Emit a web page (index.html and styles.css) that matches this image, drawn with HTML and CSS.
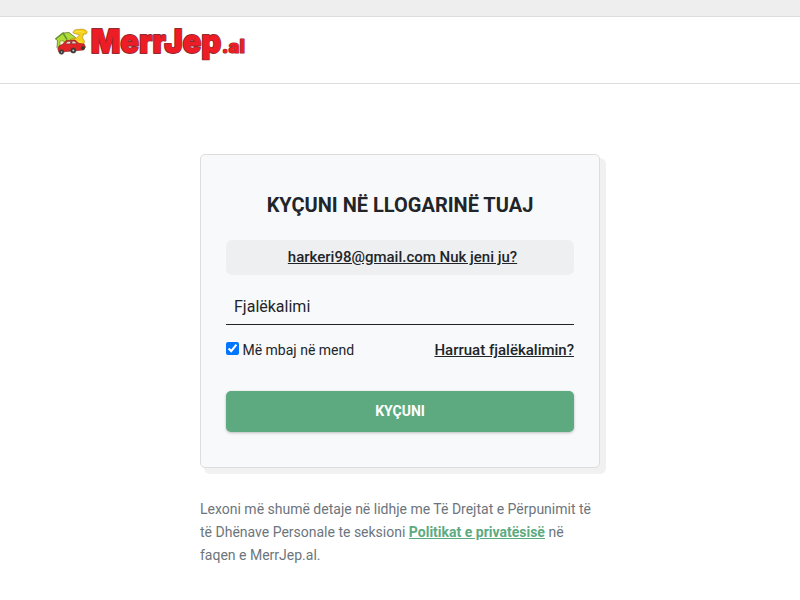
FILE: index.html
```html
<!DOCTYPE html>
<html lang="sq">
<head>
<meta charset="utf-8">
<title>MerrJep.al</title>
<link rel="stylesheet" href="styles.css">
</head>
<body>
<div class="topbar"></div>
<header class="header">
  <svg class="logo" width="192" height="36" viewBox="54 26 192 36" role="img" aria-label="MerrJep.al">
    <g stroke="#454819" stroke-width=".6" stroke-linejoin="round">
      <path d="M55.500 39L63 33l6-.5 6.500 5-2 3 .5 7-14 3-3-3 .5-7z" fill="#b0dc38"/>
      <path d="M55.500 39L63 33l4 6.500" fill="none" stroke="#64932c" stroke-width="1.500"/>
      <path d="M60 41h4v5h-4z" fill="#fffbd0" stroke="#64812c"/>
      <path d="M73 33c0-3 3-4 6-3.500 3-1 7 0 8 2 .5 2-1 3-3.500 2.500l-1 4 2 3-1 5-12-3-1-4 6-1 3-3z" fill="#f6d018" stroke="#a98b20"/>
      <path d="M74 32.500c3-1.500 7-1 10 0M71 41l11 1" fill="none" stroke="#fff169"/>
      <path d="M59 46l4-2 3-3.500 9-.5 4 3.500 5 .5 1.500 3-2 3-17 1.500-7.500 1-1-3z" fill="#e32228" stroke="#7d171b"/>
      <path d="M65.500 44l2-2.500 3-.2v2.500zm6.500-2.800l2.500 0 2.500 2.400-5 .2z" fill="#dedfd5" stroke="#762222" stroke-width=".5"/>
      <circle cx="61.500" cy="52" r="2.300" fill="#34363d"/><circle cx="61.500" cy="52" r=".8" fill="#c9cbd0" stroke="none"/>
      <circle cx="73.300" cy="50.500" r="2.600" fill="#34363d"/><circle cx="73.300" cy="50.500" r="1" fill="#c9cbd0" stroke="none"/>
      <circle cx="83" cy="48" r="1.700" fill="#34363d"/>
    </g>
    <text class="word" x="90.800" y="53.300" textLength="130.500" lengthAdjust="spacingAndGlyphs">MerrJep</text>
    <text class="word suffix" x="221.800" y="53.300" textLength="23" lengthAdjust="spacingAndGlyphs">.al</text>
  </svg>
</header>
<main class="content">
  <form class="card">
    <h1>KYÇUNI NË LLOGARINË TUAJ</h1>
    <div class="account"><a href="#">harkeri98@gmail.com Nuk jeni ju?</a></div>
    <input class="password" type="password" placeholder="Fjalëkalimi">
    <div class="options">
      <label><input type="checkbox" checked> Më mbaj në mend</label>
      <a href="#">Harruat fjalëkalimin?</a>
    </div>
    <button type="button">KYÇUNI</button>
  </form>
  <p class="privacy">Lexoni më shumë detaje në lidhje me Të Drejtat e Përpunimit të të Dhënave Personale te seksioni <a href="#">Politikat e privatësisë</a> në faqen e MerrJep.al.</p>
</main>
</body>
</html>
```
FILE: styles.css
```css
* { box-sizing: border-box; }
body { margin: 0; background: #fff; color: #212529; font-family: Roboto, sans-serif; font-size: 14px; line-height: 23px; }
.topbar { height: 17px; background: #eee; border-bottom: 1px solid #ddd; }
.header { height: 67px; padding: 9px 54px; border-bottom: 1px solid #ddd; }
.logo { display: block; overflow: visible; }
.word { font-family: Inter, sans-serif; font-size: 32.500px; font-weight: 900; fill: #ee1c25; stroke: #8f2a30; stroke-width: 1.800px; stroke-linejoin: round; paint-order: stroke; }
.suffix { font-size: 18.500px; stroke-width: 1.200px; }
.content { width: 400px; margin: 70px auto 0; }
.card { height: 314px; padding: 35px 25px; background: #f8f9fb; border: 1px solid #ddd; border-radius: 5px; box-shadow: 5px 5px 0 1px #f1f1f1; }
h1 { margin: 0; font-size: 20px; line-height: 30px; font-weight: 700; text-align: center; }
a { color: #212529; font-size: 15px; font-weight: 500; text-decoration: underline; }
.account { height: 35px; margin-top: 20px; padding-left: 5px; background: #eeeff1; border-radius: 6px; line-height: 35px; text-align: center; }
.password { display: block; width: 100%; height: 35px; margin-top: 15px; padding: 0 8px 2px; border: 0; border-bottom: 1px solid #212529; border-radius: 0; background: transparent; font: 16px Roboto, sans-serif; outline: 0; }
.password::placeholder { color: #212529; opacity: 1; }
.options { display: flex; justify-content: space-between; height: 23px; margin-top: 14px; }
.options input { width: 13px; height: 13px; margin: 0; }
button { display: block; width: 100%; height: 41px; margin-top: 29px; padding: 0 0 2px; border: 0; border-radius: 5px; background: #5daa80; color: #fff; font: 700 14px Roboto, sans-serif; box-shadow: 0 1px 3px rgba(0, 0, 0, .25); }
.privacy { margin: 30px 0 0; color: #6c757d; }
.privacy a { color: #5daa80; font-size: 14px; font-weight: 700; }
```
